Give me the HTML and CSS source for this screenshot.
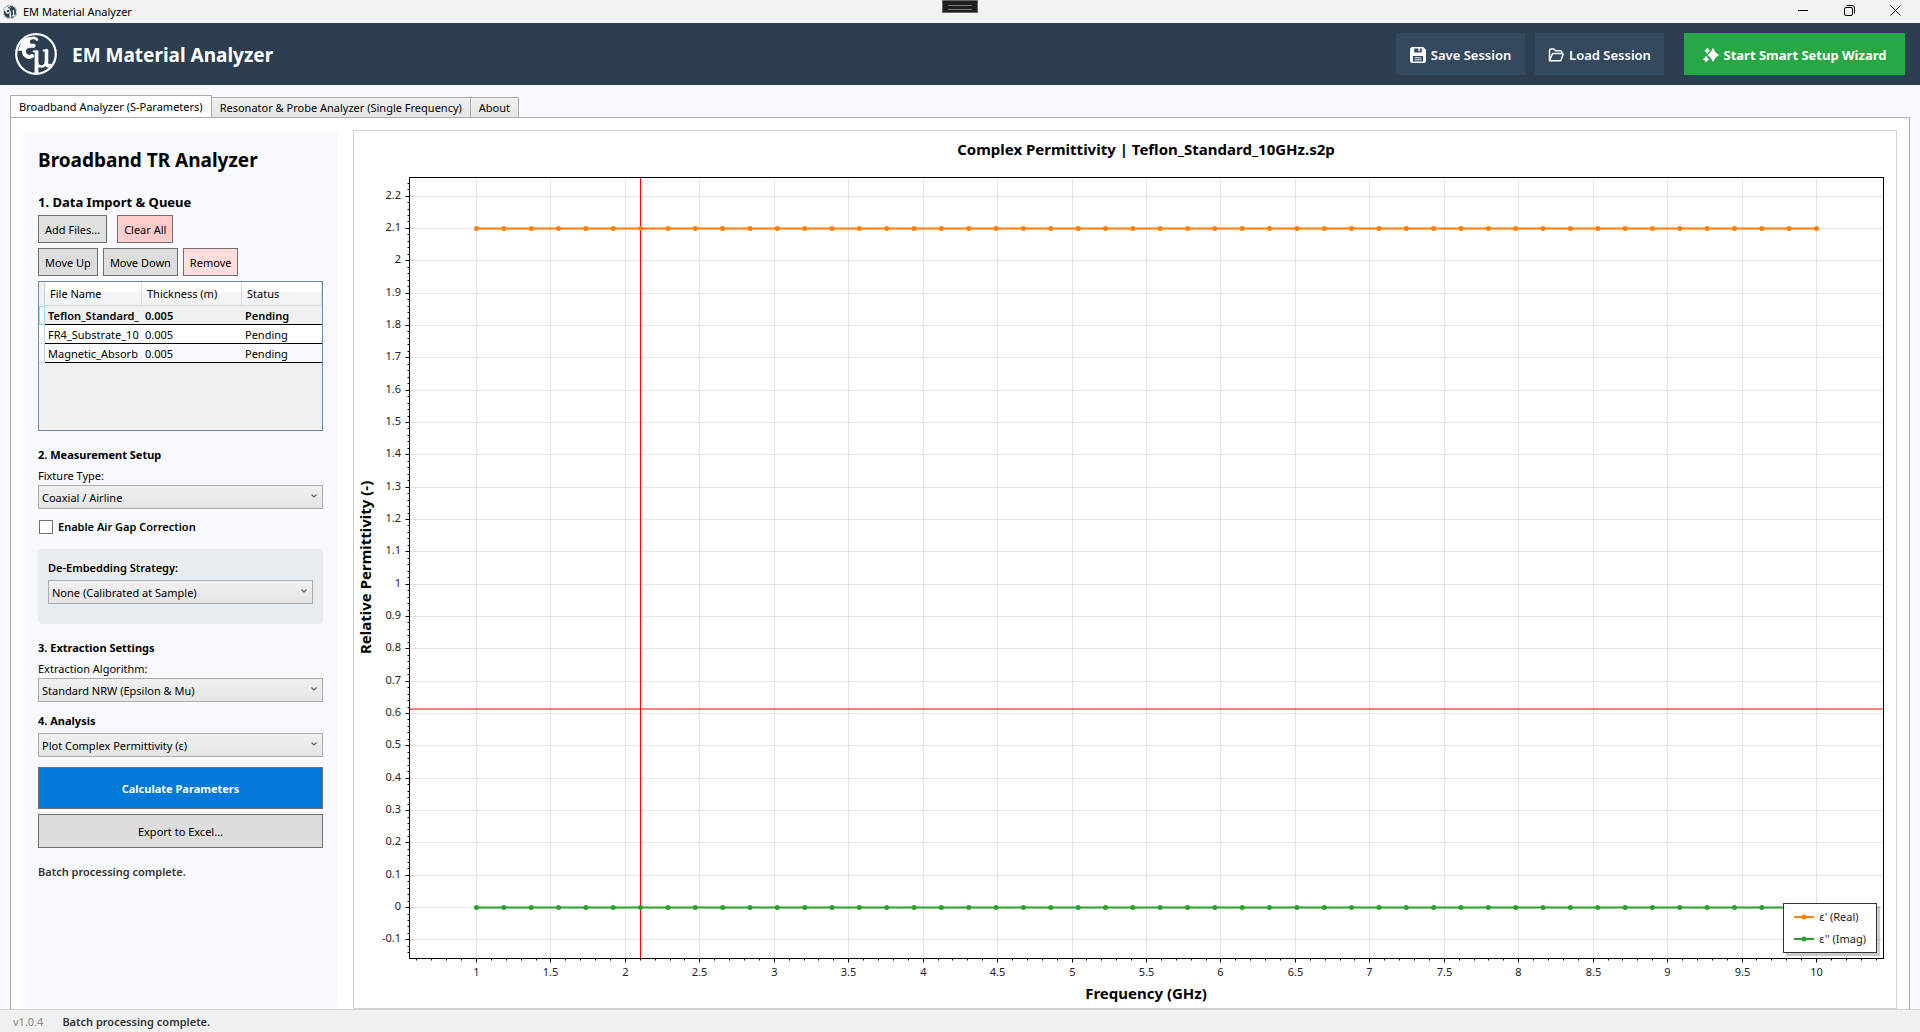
FILE: index.html
```html
<!DOCTYPE html>
<html lang="en">
<head>
<meta charset="utf-8">
<title>EM Material Analyzer</title>
<link rel="stylesheet" href="styles.css">
</head>
<body>
<svg class="defs" aria-hidden="true">
  <symbol id="logo" viewBox="0 0 42 42">
    <g fill="none" stroke="currentColor" stroke-linecap="round">
      <circle cx="21" cy="21" r="19.8" stroke-width="2.2"/>
      <path d="M22 6.500C19 3.500 13.500 5 13.500 9c0 2.600 2.400 3.800 5.500 3.600" stroke-width="2.600"/>
      <path d="M18.500 12.800C12 12 8 15 9 19.500c.8 3.800 4.500 5.500 8 3.500" stroke-width="4"/>
      <path d="M7.500 8.500c2-2 4-3 6.500-3.500-1.500 2-2 4.500-.5 6.500-3 1-4.500 3-5 5.500L4 17Z" stroke-width="1.500" fill="currentColor"/>
      <path d="M21.500 17.500V40" stroke-width="3.800" stroke-linecap="butt"/>
      <path d="M18.500 18.300h3M28.500 17.500h3" stroke-width="1.800"/>
      <path d="M21.500 27c0 5 1.500 6.500 4.500 6.500s5-2 5.500-5" stroke-width="2.600"/>
      <path d="M31.500 17.500V30c0 2.500 1 3.200 3.500 2.500" stroke-width="3.600"/>
    </g>
  </symbol>
  <symbol id="chevron" viewBox="0 0 6 4"><path d="M.5.5 3 3 5.500.5" fill="none" stroke="#606060" stroke-width="1.200"/></symbol>
</svg>

<header class="titlebar">
  <span class="app-icon"><svg width="14" height="14"><use href="#logo"/></svg></span>
  <span class="window-title">EM Material Analyzer</span>
  <span class="grip"></span>
  <div class="window-controls">
    <button type="button" aria-label="Minimize"><svg width="11" height="11" viewBox="0 0 11 11"><path d="M0 5.500h10" stroke="#000" fill="none"/></svg></button>
    <button type="button" aria-label="Restore"><svg width="11" height="11" viewBox="0 0 11 11"><g stroke="#000" fill="none"><rect x=".5" y="2.500" width="8" height="8" rx="1.500"/><path d="M2.500.5h5.500a2.500 2.500 0 0 1 2.500 2.500v5.500"/></g></svg></button>
    <button type="button" aria-label="Close"><svg width="11" height="11" viewBox="0 0 11 11"><path d="m.5.5 10 10m0-10-10 10" stroke="#000" fill="none"/></svg></button>
  </div>
</header>

<div class="banner">
  <svg class="logo" width="42" height="42"><use href="#logo"/></svg>
  <h1>EM Material Analyzer</h1>
  <button type="button" class="session">
    <svg width="16" height="16" viewBox="0 0 16 16"><path fill="#fff" fill-rule="evenodd" d="M2.500 0h10.700L16 2.800v10.700a2.500 2.500 0 0 1-2.500 2.500h-11A2.500 2.500 0 0 1 0 13.500v-11A2.500 2.500 0 0 1 2.500 0Zm1.700 1.400v4.100h7.600V1.400H9.800v2.800H8.400V1.400ZM2.900 8.900v5.700h10.200V8.900Z"/><path d="M4.500 10.800h7M4.500 12.800h7" stroke="#fff" stroke-width=".9"/></svg>
    Save Session</button>
  <button type="button" class="session">
    <svg width="16" height="16" viewBox="0 0 16 16"><path fill="none" stroke="#fff" stroke-width="1.500" stroke-linejoin="round" d="M1.500 13.500v-10a1.500 1.500 0 0 1 1.500-1.500h2.800l1.800 1.800h4.900a1.300 1.300 0 0 1 1.300 1.300v1.400M1.500 13.800 4.200 7.200q.3-.7 1-.7h9.100q1 0 .7 1l-1.900 5.400q-.3.900-1.200.9Z"/></svg>
    Load Session</button>
  <button type="button" class="wizard">
    <svg width="16" height="16" viewBox="0 0 16 16"><path fill="#fff" stroke="#fff" stroke-width=".8" stroke-linejoin="round" d="M10 1.500q1.500 4.500 5.500 6.500-4 2-5.500 6.500Q8.500 10 5 8 8.500 6 10 1.500ZM4.300 1q.6 1.900 2.500 2.800-1.900.9-2.500 2.800-.7-1.900-2.500-2.800Q3.600 2.900 4.300 1ZM3.200 9.200q.7 2 2.600 3-1.900 1-2.600 2.800-.8-1.900-2.700-2.800 1.900-1 2.700-3Z"/></svg>
    Start Smart Setup Wizard</button>
</div>

<main class="workspace">
  <div class="tabs" role="tablist">
    <button type="button" class="tab active" role="tab" aria-selected="true">Broadband Analyzer (S-Parameters)</button>
    <button type="button" class="tab" role="tab" aria-selected="false">Resonator &amp; Probe Analyzer (Single Frequency)</button>
    <button type="button" class="tab" role="tab" aria-selected="false">About</button>
  </div>

  <div class="tab-page" role="tabpanel">
    <section class="sidebar">
      <h2>Broadband TR Analyzer</h2>
      <h3 class="large">1. Data Import &amp; Queue</h3>
      <div class="button-row wide-gap">
        <button type="button" class="btn light">Add Files...</button>
        <button type="button" class="btn danger">Clear All</button>
      </div>
      <div class="button-row">
        <button type="button" class="btn">Move Up</button>
        <button type="button" class="btn">Move Down</button>
        <button type="button" class="btn warn">Remove</button>
      </div>
      <div class="queue">
        <table>
          <colgroup><col class="c-mark"><col class="c-name"><col class="c-thick"><col></colgroup>
          <thead><tr><td></td><th scope="col">File Name</th><th scope="col">Thickness (m)</th><th scope="col">Status</th></tr></thead>
          <tbody>
            <tr class="current"><td></td><td><span class="clip">Teflon_Standard_</span></td><td>0.005</td><td>Pending</td></tr>
            <tr><td></td><td><span class="clip">FR4_Substrate_10</span></td><td>0.005</td><td>Pending</td></tr>
            <tr class="alt"><td></td><td><span class="clip">Magnetic_Absorb</span></td><td>0.005</td><td>Pending</td></tr>
          </tbody>
        </table>
      </div>

      <h3>2. Measurement Setup</h3>
      <label class="field-label" for="fixture">Fixture Type:</label>
      <div class="combo"><select id="fixture"><option>Coaxial / Airline</option></select><svg width="6" height="4"><use href="#chevron"/></svg></div>
      <label class="check"><input type="checkbox"> Enable Air Gap Correction</label>
      <div class="inset">
        <label class="inset-label" for="deembed">De-Embedding Strategy:</label>
        <div class="combo"><select id="deembed"><option>None (Calibrated at Sample)</option></select><svg width="6" height="4"><use href="#chevron"/></svg></div>
      </div>

      <h3>3. Extraction Settings</h3>
      <label class="field-label" for="algo">Extraction Algorithm:</label>
      <div class="combo"><select id="algo"><option>Standard NRW (Epsilon &amp; Mu)</option></select><svg width="6" height="4"><use href="#chevron"/></svg></div>

      <h3 class="close">4. Analysis</h3>
      <div class="combo"><select aria-label="Analysis"><option>Plot Complex Permittivity (ε)</option></select><svg width="6" height="4"><use href="#chevron"/></svg></div>
      <button type="button" class="btn primary">Calculate Parameters</button>
      <button type="button" class="btn export">Export to Excel...</button>
      <p class="result">Batch processing complete.</p>
    </section>

    <section class="chart">
      <h2 class="chart-title">Complex Permittivity | Teflon_Standard_10GHz.s2p</h2>
      <div class="y-title">Relative Permittivity (-)</div>
      <div class="plot"><svg id="plot" role="img" aria-label="Complex permittivity against frequency"></svg></div>
      <div class="x-title">Frequency (GHz)</div>
      <ul class="legend">
        <li class="real"><svg width="20" height="6"><path d="M0 3h20"/><circle cx="10" cy="3" r="2.500"/></svg>ε' (Real)</li>
        <li class="imag"><svg width="20" height="6"><path d="M0 3h20"/><circle cx="10" cy="3" r="2.500"/></svg>ε'' (Imag)</li>
      </ul>
    </section>
  </div>
</main>

<footer class="statusbar">
  <span class="version">v1.0.4</span>
  <span class="message">Batch processing complete.</span>
</footer>
<script src="chart.js"></script>
</body>
</html>
```
FILE: styles.css
```css
* { box-sizing: border-box; }

body {
  margin: 0;
  min-height: 100vh;
  display: flex;
  flex-direction: column;
  background: #f8f9fc;
  color: #000;
  font: 11px/16px "Noto Sans", "Open Sans", sans-serif;
}

h1, h2, h3, p, ul { margin: 0; padding: 0; }
button, select { font: inherit; color: inherit; }
svg { display: block; flex: none; }
.defs { position: absolute; width: 0; height: 0; }

/* Window title bar */
.titlebar {
  position: relative;
  display: flex;
  align-items: center;
  height: 23px;
  padding: 0 2px 0 3px;
  background: #f3f3f3;
}
.app-icon { color: #fff; background: #2c3e50; border-radius: 50%; }
.window-title { margin-left: 6px; }
.grip {
  position: absolute;
  top: 0;
  left: 50%;
  width: 36px;
  height: 13px;
  margin-left: -18px;
  border: 1px solid #666;
  background: #202020;
}
.grip::after {
  content: "";
  display: block;
  height: 3px;
  margin: 4px 5px;
  border: solid #777;
  border-width: 1px 0;
}
.window-controls { display: flex; margin-left: auto; padding-bottom: 3px; }
.window-controls button {
  display: grid;
  place-items: center;
  width: 46px;
  height: 20px;
  padding: 0;
  border: 0;
  background: none;
}

/* Application banner */
.banner {
  display: flex;
  align-items: center;
  height: 62px;
  padding: 0 15px;
  background: #2c3e50;
  color: #fff;
}
.banner h1 { margin: 0 auto 0 15px; padding-top: 2px; font-size: 19px; line-height: 28px; }
.banner button {
  display: flex;
  align-items: center;
  justify-content: center;
  gap: 5px;
  height: 42px;
  border: 0;
  font-size: 13px;
  font-weight: 600;
}
.banner .session { width: 129px; margin-right: 10px; padding: 2px 0 0; background: #34495e; }
.banner .wizard { margin-left: 10px; padding: 2px 0 0; width: 221px; background: #28a745; font-weight: 700; }

/* Tabs */
.workspace { flex: 1; display: flex; flex-direction: column; padding: 10px 10px 0; }
.tabs { display: flex; align-items: flex-end; height: 23px; margin-bottom: -1px; }
.tab {
  height: 21px;
  padding: 0 8px;
  border: 1px solid #acacac;
  border-left-width: 0;
  background: linear-gradient(#f0f0f0, #e5e5e5);
  white-space: nowrap;
}
.tab.active {
  height: 23px;
  padding-bottom: 1px;
  border-left-width: 1px;
  border-bottom: 0;
  background: #fff;
}
.tab-page {
  flex: 1;
  display: grid;
  grid-template-columns: 315px minmax(0, 1fr);
  gap: 15px;
  padding: 12px 12px 0;
  border: 1px solid #acacac;
  border-bottom: 0;
  background: #fff;
}

/* Settings column */
.sidebar {
  display: flex;
  flex-direction: column;
  padding: 15px;
  border-radius: 5px;
  background: #f8f9fc;
}
.sidebar h2 { font-size: 19px; line-height: 30px; }
.sidebar h3 { margin-top: 16px; font-size: 11px; line-height: 16px; }
.sidebar h3.large { margin-top: 18px; font-size: 13px; line-height: 18px; }
.sidebar h3.close { margin: 11px 0 4px; }
.button-row { display: flex; gap: 5px; margin-top: 5px; }
.button-row.wide-gap { gap: 10px; margin-top: 4px; }
.btn {
  padding: 6px 6px 4px;
  border: 1px solid #707070;
  background: #ddd;
}
.btn.light { background: #e0e0e0; }
.btn.danger { background: #fcc; }
.btn.warn { background: #fdd; }
.btn.primary {
  margin-top: 10px;
  padding: 13px 12px 11px;
  background: #0078d7;
  color: #fff;
  font-weight: 700;
}
.btn.export { margin-top: 5px; padding: 9px 12px 7px; }

.queue {
  height: 150px;
  margin-top: 5px;
  border: 1px solid #688caf;
  background: #f0f0f0;
}
.queue table { width: 100%; table-layout: fixed; border-collapse: separate; border-spacing: 0; }
.c-mark { width: 6px; }
.c-name { width: 97px; }
.c-thick { width: 100px; }
.queue th {
  height: 24px;
  padding: 1px 5px 0;
  border: solid #d8dade;
  border-width: 0 1px 1px 0;
  background: linear-gradient(#fff 35%, #f5f6f8 45%, #f1f2f5);
  text-align: left;
  font-weight: 400;
}
.queue td { height: 19px; padding: 0 3px; }
.queue td:first-child { padding: 0; border-right: 1px solid #d0d0d0; }
.queue tbody td {
  padding-top: 1px;
  border-bottom: 1px solid #000;
  background: #fff;
  line-height: 17px;
  white-space: nowrap;
}
.clip { display: block; overflow: hidden; }
.queue tbody td:first-child { border-bottom-color: #ddd; }
.queue .current td { background: #f0f0f0; font-weight: 600; }
.queue .current td:first-child { border: 1px solid #99d9f5; background: #f5fbff; }
.queue .alt td { background: #f8f9fc; }

.field-label { margin: 5px 0 1px; }
.combo { display: grid; align-items: center; }
.combo > * { grid-area: 1 / 1; }
.combo select {
  width: 100%;
  height: 24px;
  padding: 2px 20px 0 3px;
  border: 1px solid #acacac;
  border-radius: 0;
  background: linear-gradient(#f0f0f0, #e5e5e5);
  appearance: none;
}
.combo svg { justify-self: end; margin: 0 6px 2px 0; pointer-events: none; }
.check { display: flex; align-items: center; gap: 5px; margin-top: 10px; font-weight: 600; }
.check input {
  width: 14px;
  height: 14px;
  margin: 0 0 0 1px;
  border: 1px solid #707070;
  background: #fff;
  appearance: none;
}
.inset {
  margin-top: 14px;
  padding: 11px 10px 20px;
  border-radius: 4px;
  background: #e9ecef;
}
.inset-label { display: block; margin-bottom: 4px; font-weight: 600; }
.result { margin-top: 16px; color: #333; font-weight: 600; }

/* Chart */
.chart {
  position: relative;
  display: grid;
  grid-template: 36px minmax(0, 1fr) 18px / 23px minmax(0, 1fr);
  padding-bottom: 6px;
  border: 1px solid #d3d3d3;
  background: #fff;
}
.chart-title, .x-title, .y-title { font-size: 15px; font-weight: 700; text-align: center; }
.chart-title { grid-column: 1 / -1; padding: 0 13px 0 55px; line-height: 36px; }
.y-title {
  padding: 26px 0 10px;
  line-height: 23px;
  writing-mode: vertical-rl;
  transform: rotate(180deg);
}
.plot { position: relative; min-height: 400px; }
#plot { position: absolute; width: 100%; height: 100%; }
.x-title { grid-column: 2; padding: 0 13px 0 32px; line-height: 18px; }

#plot text { font-size: 11px; fill: #222; }
.grid { stroke: #000; stroke-opacity: .1; }
.axis { stroke: #000; fill: none; }
.cross-v { stroke: #f00; }
.cross-h { stroke: #f00; stroke-opacity: .5; stroke-width: 2; }
.series { fill: none; stroke-width: 2; }
.series.real { stroke: #ff7f0e; }
.series.imag { stroke: #2ca02c; }
.dot.real { fill: #ff7f0e; }
.dot.imag { fill: #2ca02c; }

.legend {
  position: absolute;
  right: 19px;
  bottom: 55px;
  padding: 2px 10px;
  border: 1px solid #333;
  background: #fff;
  box-shadow: 3px 3px 0 rgba(0, 0, 0, .2);
  list-style: none;
  color: #222;
}
.legend li { display: flex; align-items: center; gap: 5px; line-height: 22px; }
.legend path { stroke-width: 2; }
.legend .real { stroke: #ff7f0e; fill: #ff7f0e; }
.legend .imag { stroke: #2ca02c; fill: #2ca02c; }
.legend circle { stroke: none; }

/* Status bar */
.statusbar {
  display: flex;
  align-items: center;
  gap: 19px;
  height: 23px;
  padding: 2px 13px 0;
  border-top: 1px solid #d3d3d3;
  background: #f0f0f0;
}
.version { color: #888; }
.message { color: #333; font-weight: 600; }
```
FILE: chart.js
```
(function () {
  var svg = document.getElementById('plot');
  var margin = { left: 32, right: 13, top: 10, bottom: 26 };
  var xRange = [0.55, 10.45];
  var yRange = [-0.1575, 2.2575];
  var marker = { x: 2.102, y: 0.614 };
  var points = 50;

  function line(x1, y1, x2, y2, cls) {
    return '<path class="' + cls + '" d="M' + x1 + ' ' + y1 + 'L' + x2 + ' ' + y2 + '"/>';
  }
  function crisp(v) { return Math.floor(v) + 0.5; }

  function draw() {
    var w = svg.clientWidth, h = svg.clientHeight;
    var l = margin.left + 0.5, t = margin.top + 0.5;
    var r = w - margin.right + 0.5, b = h - margin.bottom + 0.5;
    function px(v) { return l + (v - xRange[0]) / (xRange[1] - xRange[0]) * (r - l); }
    function py(v) { return b - (v - yRange[0]) / (yRange[1] - yRange[0]) * (b - t); }
    var out = '', i, x, y;

    for (i = 6; i <= 104; i++) {
      x = crisp(px(i / 10));
      if (i % 5 === 0 && i >= 10) {
        out += line(x, t, x, b, 'grid') + line(x, b, x, b + 4, 'axis');
        out += '<text text-anchor="middle" x="' + x + '" y="' + (b + 17.5) + '">' + i / 10 + '</text>';
      } else {
        out += line(x, b, x, b + 2, 'axis');
      }
    }
    for (i = -7; i <= 112; i++) {
      y = crisp(py(i / 50));
      if (i % 5 === 0) {
        out += line(l, y, r, y, 'grid') + line(l - 4, y, l, y, 'axis');
        out += '<text text-anchor="end" x="' + (l - 8.5) + '" y="' + (y + 2.5) + '">' + i / 50 + '</text>';
      } else {
        out += line(l - 2, y, l, y, 'axis');
      }
    }

    out += line(crisp(px(marker.x)), t, crisp(px(marker.x)), b, 'cross-v');
    out += line(l, Math.round(py(marker.y)), r, Math.round(py(marker.y)), 'cross-h');

    [['real', 2.1], ['imag', 0]].forEach(function (s) {
      y = py(s[1]);
      out += line(px(1), y, px(10), y, 'series ' + s[0]);
      for (i = 0; i < points; i++) {
        out += '<circle class="dot ' + s[0] + '" r="2.5" cx="' + px(1 + 9 * i / (points - 1)) + '" cy="' + y + '"/>';
      }
    });

    out += '<rect class="axis" x="' + l + '" y="' + t + '" width="' + (r - l) + '" height="' + (b - t) + '"/>';
    svg.innerHTML = out;
  }

  draw();
  window.addEventListener('resize', draw);
})();
```
